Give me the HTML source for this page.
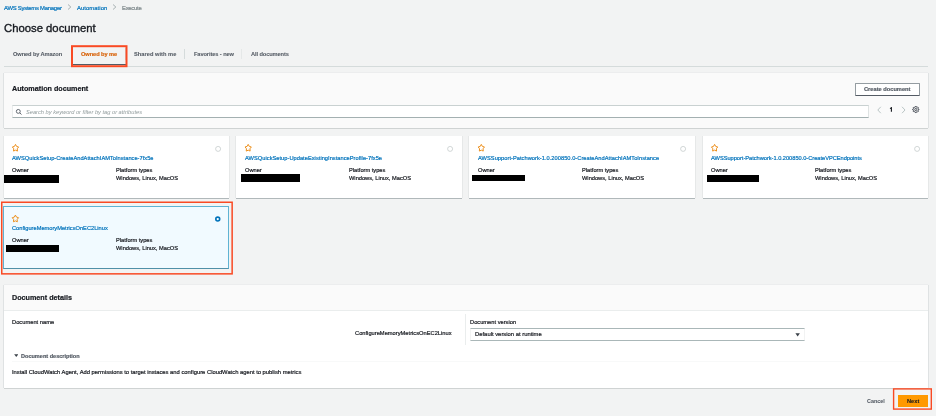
<!DOCTYPE html>
<html><head><meta charset="utf-8"><style>
html,body{margin:0;padding:0;}
body{width:936px;height:416px;overflow:hidden;background:#f2f3f3;position:relative;font-family:"Liberation Sans",sans-serif;}
.t{position:absolute;white-space:nowrap;line-height:1;-webkit-text-stroke:0.2px currentColor;will-change:transform;}
.r{position:absolute;}
</style></head><body>
<div class="t" style="left:4.00px;top:6px;font-size:5.9px;font-weight:400;color:#0073bb;font-style:normal;;letter-spacing:-0.245px">AWS Systems Manager</div>
<div class="t" style="left:76.80px;top:6px;font-size:5.9px;font-weight:400;color:#0073bb;font-style:normal;;letter-spacing:0.050px">Automation</div>
<div class="t" style="left:122.00px;top:6px;font-size:5.9px;font-weight:400;color:#7d878a;font-style:normal;;letter-spacing:-0.269px">Execute</div>
<svg class="r" style="left:66.9px;top:4.2px" width="5" height="6" viewBox="0 0 5 6"><path d="M1 0.5 L3.8 3 L1 5.5" fill="none" stroke="#879596" stroke-width="0.7"/></svg>
<svg class="r" style="left:112.1px;top:4.2px" width="5" height="6" viewBox="0 0 5 6"><path d="M1 0.5 L3.8 3 L1 5.5" fill="none" stroke="#879596" stroke-width="0.7"/></svg>
<div class="t" style="left:4.00px;top:23px;font-size:11.3px;font-weight:400;color:#16191f;font-style:normal;-webkit-text-stroke:0.35px currentColor">Choose document</div>
<div class="r" style="left:3.60px;top:66.00px;width:924.70px;height:1.00px;background:#d5dbdb"></div>
<div class="t" style="left:13.00px;top:52px;font-size:5.7px;font-weight:700;color:#545b64;font-style:normal;-webkit-text-stroke:0.08px currentColor;letter-spacing:-0.105px">Owned by Amazon</div>
<div class="t" style="left:133.80px;top:52px;font-size:5.7px;font-weight:700;color:#545b64;font-style:normal;-webkit-text-stroke:0.08px currentColor;letter-spacing:0.021px">Shared with me</div>
<div class="t" style="left:193.70px;top:52px;font-size:5.7px;font-weight:700;color:#545b64;font-style:normal;-webkit-text-stroke:0.08px currentColor;letter-spacing:-0.101px">Favorites - new</div>
<div class="t" style="left:251.20px;top:52px;font-size:5.7px;font-weight:700;color:#545b64;font-style:normal;-webkit-text-stroke:0.08px currentColor;letter-spacing:-0.106px">All documents</div>
<div class="t" style="left:80.50px;top:52px;font-size:5.7px;font-weight:700;color:#d8650e;font-style:normal;;letter-spacing:-0.086px">Owned by me</div>
<div class="r" style="left:73.00px;top:64.00px;width:52.50px;height:1.30px;background:#545b64"></div>
<div class="r" style="left:125.00px;top:47.50px;width:0.80px;height:12.00px;background:#d5dbdb"></div>
<div class="r" style="left:184.20px;top:48.60px;width:0.80px;height:10.60px;background:#d5dbdb"></div>
<div class="r" style="left:241.30px;top:48.60px;width:0.80px;height:10.60px;background:#e5e8e8"></div>
<svg class="r" style="left:0;top:0" width="936" height="416"><rect x="72.00" y="46.20" width="54.50" height="20.00" fill="none" stroke="#f94a24" stroke-width="2.0"/></svg>
<div class="r" style="left:3.60px;top:72.70px;width:924.70px;height:54.90px;background:#fafafa;box-shadow:0 0.8px 0 0 rgba(0,28,36,.18),0.8px 0 0 0 rgba(0,28,36,.10),-0.8px 0 0 0 rgba(0,28,36,.10),0 -0.5px 0 0 rgba(0,28,36,.05);"></div>
<div class="t" style="left:12.00px;top:85px;font-size:7.2px;font-weight:700;color:#16191f;font-style:normal;">Automation document</div>
<div class="r" style="left:855.20px;top:82.90px;width:64.60px;height:12.70px;border:1px solid #949ca1;border-bottom:1.5px solid #545b64;border-radius:1px;background:#fff;box-sizing:border-box"></div>
<div class="t" style="left:864.20px;top:87px;font-size:5.7px;font-weight:700;color:#545b64;font-style:normal;">Create document</div>
<div class="r" style="left:11.80px;top:105.00px;width:856.80px;height:13.00px;background:#fff;border-top:1px solid #c9d1d1;border-bottom:1px solid #a3b0b1;border-left:1px solid #e9ecec;border-right:1px solid #dfe3e3;box-sizing:border-box"></div>
<svg class="r" style="left:14px;top:107px" width="10" height="10" viewBox="0 0 10 10"><circle cx="4.3" cy="4.4" r="1.95" fill="none" stroke="#545b64" stroke-width="0.9"/><path d="M5.7 5.8 L7.4 7.5" stroke="#545b64" stroke-width="1.0"/></svg>
<div class="t" style="left:25.70px;top:110px;font-size:5.7px;font-weight:400;color:#8f9a9b;font-style:italic;-webkit-text-stroke:0">Search by keyword or filter by tag or attributes</div>
<svg class="r" style="left:876px;top:106px" width="7" height="8" viewBox="0 0 7 8"><path d="M4.8 0.8 L1.8 4 L4.8 7.2" fill="none" stroke="#aab7b8" stroke-width="0.8"/></svg>
<svg class="r" style="left:889px;top:107px" width="5" height="6" viewBox="0 0 5 6"><path d="M1.0 1.6 L2.4 0.7 L2.4 4.8" fill="none" stroke="#16191f" stroke-width="1.1" stroke-linejoin="miter"/></svg>
<svg class="r" style="left:899.5px;top:106px" width="7" height="8" viewBox="0 0 7 8"><path d="M2 0.8 L5 4 L2 7.2" fill="none" stroke="#aab7b8" stroke-width="0.8"/></svg>
<svg class="r" style="left:911.9px;top:106px" width="8" height="8" viewBox="0 0 8 8"><path d="M3.18 1.13 L3.32 0.44 L4.28 0.44 L4.42 1.13 L5.04 1.39 L5.62 0.99 L6.31 1.68 L5.91 2.26 L6.17 2.88 L6.86 3.02 L6.86 3.98 L6.17 4.12 L5.91 4.74 L6.31 5.32 L5.62 6.01 L5.04 5.61 L4.42 5.87 L4.28 6.56 L3.32 6.56 L3.18 5.87 L2.56 5.61 L1.98 6.01 L1.29 5.32 L1.69 4.74 L1.43 4.12 L0.74 3.98 L0.74 3.02 L1.43 2.88 L1.69 2.26 L1.29 1.68 L1.98 0.99 L2.56 1.39 Z" fill="none" stroke="#414750" stroke-width="0.95" stroke-linejoin="round"/><circle cx="3.8" cy="3.5" r="1.05" fill="none" stroke="#414750" stroke-width="0.9"/></svg>
<div class="r" style="left:3.60px;top:136.30px;width:225.40px;height:61.70px;background:#fff;box-shadow:0 0.6px 0 0 rgba(0,28,36,.45),0.6px 0 0 0 rgba(0,28,36,.08),-0.6px 0 0 0 rgba(0,28,36,.08);"></div>
<svg class="r" style="left:0;top:0" width="936" height="416"><polygon points="15.50,144.40 16.59,146.42 18.64,146.96 17.26,148.74 17.44,151.09 15.50,150.17 13.56,151.09 13.74,148.74 12.36,146.96 14.41,146.42" fill="none" stroke="#ec8f1c" stroke-width="1.0" stroke-linejoin="round"/></svg>
<svg class="r" style="left:213.60px;top:144.5px" width="8" height="8" viewBox="0 0 8 8"><circle cx="4.1" cy="3.9" r="2.5" fill="#fff" stroke="#c3c9ca" stroke-width="0.75"/></svg>
<div class="t" style="left:12.00px;top:156px;font-size:5.7px;font-weight:400;color:#0073bb;font-style:normal;;letter-spacing:0.015px">AWSQuickSetup-CreateAndAttachIAMToInstance-7fx5e</div>
<div class="t" style="left:12.00px;top:168px;font-size:5.7px;font-weight:400;color:#16191f;font-style:normal;">Owner</div>
<div class="t" style="left:115.90px;top:168px;font-size:5.7px;font-weight:400;color:#16191f;font-style:normal;">Platform types</div>
<div class="t" style="left:115.90px;top:176px;font-size:5.7px;font-weight:400;color:#16191f;font-style:normal;">Windows, Linux, MacOS</div>
<div class="r" style="left:4.10px;top:175.00px;width:54.90px;height:7.80px;background:#000"></div>
<div class="r" style="left:236.30px;top:136.30px;width:225.40px;height:61.70px;background:#fff;box-shadow:0 0.6px 0 0 rgba(0,28,36,.45),0.6px 0 0 0 rgba(0,28,36,.08),-0.6px 0 0 0 rgba(0,28,36,.08);"></div>
<svg class="r" style="left:0;top:0" width="936" height="416"><polygon points="248.20,144.40 249.29,146.42 251.34,146.96 249.96,148.74 250.14,151.09 248.20,150.17 246.26,151.09 246.44,148.74 245.06,146.96 247.11,146.42" fill="none" stroke="#ec8f1c" stroke-width="1.0" stroke-linejoin="round"/></svg>
<svg class="r" style="left:446.30px;top:144.5px" width="8" height="8" viewBox="0 0 8 8"><circle cx="4.1" cy="3.9" r="2.5" fill="#fff" stroke="#c3c9ca" stroke-width="0.75"/></svg>
<div class="t" style="left:245.00px;top:156px;font-size:5.7px;font-weight:400;color:#0073bb;font-style:normal;;letter-spacing:0.027px">AWSQuickSetup-UpdateExistingInstanceProfile-7fx5e</div>
<div class="t" style="left:244.70px;top:168px;font-size:5.7px;font-weight:400;color:#16191f;font-style:normal;">Owner</div>
<div class="t" style="left:348.60px;top:168px;font-size:5.7px;font-weight:400;color:#16191f;font-style:normal;">Platform types</div>
<div class="t" style="left:348.60px;top:176px;font-size:5.7px;font-weight:400;color:#16191f;font-style:normal;">Windows, Linux, MacOS</div>
<div class="r" style="left:241.00px;top:173.80px;width:59.00px;height:8.00px;background:#000"></div>
<div class="r" style="left:469.40px;top:136.30px;width:225.40px;height:61.70px;background:#fff;box-shadow:0 0.6px 0 0 rgba(0,28,36,.45),0.6px 0 0 0 rgba(0,28,36,.08),-0.6px 0 0 0 rgba(0,28,36,.08);"></div>
<svg class="r" style="left:0;top:0" width="936" height="416"><polygon points="481.30,144.40 482.39,146.42 484.44,146.96 483.06,148.74 483.24,151.09 481.30,150.17 479.36,151.09 479.54,148.74 478.16,146.96 480.21,146.42" fill="none" stroke="#ec8f1c" stroke-width="1.0" stroke-linejoin="round"/></svg>
<svg class="r" style="left:679.40px;top:144.5px" width="8" height="8" viewBox="0 0 8 8"><circle cx="4.1" cy="3.9" r="2.5" fill="#fff" stroke="#c3c9ca" stroke-width="0.75"/></svg>
<div class="t" style="left:478.00px;top:156px;font-size:5.7px;font-weight:400;color:#0073bb;font-style:normal;;letter-spacing:0.034px">AWSSupport-Patchwork-1.0.200850.0-CreateAndAttachIAMToInstance</div>
<div class="t" style="left:477.80px;top:168px;font-size:5.7px;font-weight:400;color:#16191f;font-style:normal;">Owner</div>
<div class="t" style="left:581.70px;top:168px;font-size:5.7px;font-weight:400;color:#16191f;font-style:normal;">Platform types</div>
<div class="t" style="left:581.70px;top:176px;font-size:5.7px;font-weight:400;color:#16191f;font-style:normal;">Windows, Linux, MacOS</div>
<div class="r" style="left:472.00px;top:175.00px;width:53.00px;height:5.90px;background:#000"></div>
<div class="r" style="left:702.70px;top:136.30px;width:225.40px;height:61.70px;background:#fff;box-shadow:0 0.6px 0 0 rgba(0,28,36,.45),0.6px 0 0 0 rgba(0,28,36,.08),-0.6px 0 0 0 rgba(0,28,36,.08);"></div>
<svg class="r" style="left:0;top:0" width="936" height="416"><polygon points="714.60,144.40 715.69,146.42 717.74,146.96 716.36,148.74 716.54,151.09 714.60,150.17 712.66,151.09 712.84,148.74 711.46,146.96 713.51,146.42" fill="none" stroke="#ec8f1c" stroke-width="1.0" stroke-linejoin="round"/></svg>
<svg class="r" style="left:912.70px;top:144.5px" width="8" height="8" viewBox="0 0 8 8"><circle cx="4.1" cy="3.9" r="2.5" fill="#fff" stroke="#c3c9ca" stroke-width="0.75"/></svg>
<div class="t" style="left:711.00px;top:156px;font-size:5.7px;font-weight:400;color:#0073bb;font-style:normal;;letter-spacing:-0.026px">AWSSupport-Patchwork-1.0.200850.0-CreateVPCEndpoints</div>
<div class="t" style="left:711.10px;top:168px;font-size:5.7px;font-weight:400;color:#16191f;font-style:normal;">Owner</div>
<div class="t" style="left:815.00px;top:168px;font-size:5.7px;font-weight:400;color:#16191f;font-style:normal;">Platform types</div>
<div class="t" style="left:815.00px;top:176px;font-size:5.7px;font-weight:400;color:#16191f;font-style:normal;">Windows, Linux, MacOS</div>
<div class="r" style="left:707.00px;top:175.00px;width:52.00px;height:6.80px;background:#000"></div>
<div class="r" style="left:3.20px;top:205.80px;width:226.00px;height:62.80px;background:#f1faff;border:1px solid #5fb3d3;border-bottom-color:#4f90a8;box-sizing:border-box"></div>
<svg class="r" style="left:0;top:0" width="936" height="416"><polygon points="15.40,215.10 16.49,217.12 18.54,217.66 17.16,219.44 17.34,221.79 15.40,220.87 13.46,221.79 13.64,219.44 12.26,217.66 14.31,217.12" fill="none" stroke="#ec8f1c" stroke-width="1.0" stroke-linejoin="round"/></svg>
<svg class="r" style="left:213.5px;top:214.8px" width="8" height="8" viewBox="0 0 8 8"><circle cx="3.75" cy="4.05" r="1.95" fill="#fff" stroke="#0073bb" stroke-width="1.6"/></svg>
<div class="t" style="left:11.80px;top:226px;font-size:5.7px;font-weight:400;color:#0073bb;font-style:normal;">ConfigureMemoryMetricsOnEC2Linux</div>
<div class="t" style="left:11.80px;top:238px;font-size:5.7px;font-weight:400;color:#16191f;font-style:normal;">Owner</div>
<div class="t" style="left:116.00px;top:238px;font-size:5.7px;font-weight:400;color:#16191f;font-style:normal;">Platform types</div>
<div class="t" style="left:116.00px;top:246px;font-size:5.7px;font-weight:400;color:#16191f;font-style:normal;">Windows, Linux, MacOS</div>
<div class="r" style="left:6.00px;top:245.00px;width:53.20px;height:6.60px;background:#000"></div>
<svg class="r" style="left:0;top:0" width="936" height="416"><rect x="1.75" y="202.25" width="230.40" height="71.60" fill="none" stroke="#f94a24" stroke-width="1.5"/></svg>
<div class="r" style="left:3.50px;top:284.80px;width:924.80px;height:103.20px;background:#fff;box-shadow:0 0.8px 0 0 rgba(0,28,36,.18),0.8px 0 0 0 rgba(0,28,36,.10),-0.8px 0 0 0 rgba(0,28,36,.10),0 -0.5px 0 0 rgba(0,28,36,.05);"></div>
<div class="r" style="left:3.50px;top:284.80px;width:924.80px;height:26.40px;background:#fafafa;border-bottom:1px solid #eaeded;box-sizing:border-box"></div>
<div class="t" style="left:11.75px;top:294px;font-size:7.2px;font-weight:700;color:#16191f;font-style:normal;">Document details</div>
<div class="t" style="left:11.75px;top:320px;font-size:5.75px;font-weight:400;color:#16191f;font-style:normal;">Document name</div>
<div class="t" style="left:354.70px;top:331px;font-size:5.74px;font-weight:400;color:#16191f;font-style:normal;">ConfigureMemoryMetricsOnEC2Linux</div>
<div class="r" style="left:465.20px;top:313.70px;width:0.80px;height:31.00px;background:#eaeded"></div>
<div class="t" style="left:469.80px;top:320px;font-size:5.73px;font-weight:400;color:#16191f;font-style:normal;">Document version</div>
<div class="r" style="left:469.80px;top:328.20px;width:335.20px;height:12.60px;background:#fff;border-top:1px solid #aab7b8;border-bottom:1px solid #aab7b8;border-left:1px solid #f2f3f3;border-right:1px solid #f2f3f3;box-sizing:border-box"></div>
<div class="t" style="left:474.70px;top:332px;font-size:5.87px;font-weight:400;color:#16191f;font-style:normal;">Default version at runtime</div>
<svg class="r" style="left:794.6px;top:332.6px" width="6" height="4" viewBox="0 0 6 4"><path d="M0.4 0.3 L4.9 0.3 L2.65 3.5 Z" fill="#3b4249"/></svg>
<svg class="r" style="left:13.9px;top:354.2px" width="4.5" height="3.2" viewBox="0 0 6 4"><path d="M0.2 0.2 L5.8 0.2 L3 3.8 Z" fill="#3b4249"/></svg>
<div class="t" style="left:21.20px;top:354px;font-size:5.56px;font-weight:700;color:#545b64;font-style:normal;">Document description</div>
<div class="r" style="left:11.80px;top:361.00px;width:908.20px;height:1.00px;background:#f8f9f9"></div>
<div class="t" style="left:11.75px;top:370px;font-size:5.82px;font-weight:400;color:#16191f;font-style:normal;">Install CloudWatch Agent, Add permissions to target instaces and configure CloudWatch agent to publish metrics</div>
<div class="t" style="left:867.20px;top:399px;font-size:5.4px;font-weight:700;color:#545b64;font-style:normal;-webkit-text-stroke:0.05px currentColor">Cancel</div>
<div class="r" style="left:898.20px;top:395.00px;width:29.70px;height:11.90px;background:#ff9900"></div>
<div class="t" style="left:906.70px;top:399px;font-size:5.67px;font-weight:700;color:#16191f;font-style:normal;-webkit-text-stroke:0.05px currentColor">Next</div>
<svg class="r" style="left:0;top:0" width="936" height="416"><rect x="893.60" y="388.90" width="37.70" height="20.20" fill="none" stroke="#f94a24" stroke-width="1.4"/></svg>
</body></html>
